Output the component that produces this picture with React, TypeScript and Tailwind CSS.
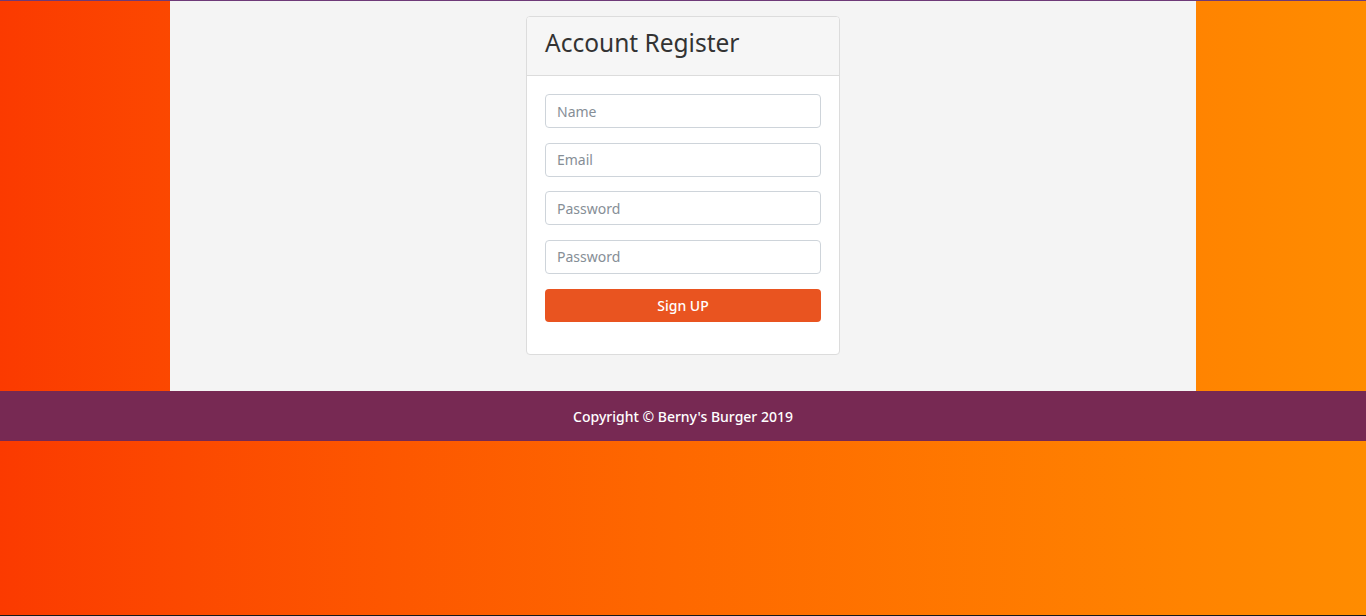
const fields = [
  { type: "text", placeholder: "Name" },
  { type: "email", placeholder: "Email" },
  { type: "password", placeholder: "Password" },
  { type: "password", placeholder: "Password" },
];

const App = () => {
  return (
    <div
      className="h-[616px] flex flex-col border-t border-t-[#6e3a78] border-b border-b-[#1a1a1a] bg-gradient-to-r from-[#fb3a00] to-[#ff8c00]"
      style={{ fontFamily: '"Noto Sans", "Open Sans", sans-serif' }}
    >
      <main className="mx-auto w-[1026px] h-[390px] bg-[#f4f4f4] flex justify-center pt-[15px]">
        <div className="w-[314px] h-[339px] bg-white border border-[#dcdcdc] rounded-[4px] overflow-hidden">
          <div className="h-[59px] bg-[#f6f6f6] border-b border-[#dcdcdc] px-[18px] flex items-start pt-[11px]">
            <h2 className="text-[24.5px] leading-[30px] text-[#333]">Account Register</h2>
          </div>
          <form className="px-[18px] pt-[18px] flex flex-col">
            {fields.map((f, i) => (
              <input
                key={i}
                type={f.type}
                placeholder={f.placeholder}
                className="h-[34px] mb-[14.5px] w-full border border-[#ced4da] rounded-[4px] px-[11px] text-[14px] text-[#495057] placeholder:text-[#868e96] outline-none"
              />
            ))}
            <button
              type="button"
              className="mt-[1px] h-[33px] w-full bg-[#e95420] text-white text-[14px] font-medium rounded-[4px]"
            >
              Sign UP
            </button>
          </form>
        </div>
      </main>
      <footer className="h-[50px] bg-[#772953] flex items-center justify-center">
        <p className="text-white text-[14px] font-medium">Copyright © Berny's Burger 2019</p>
      </footer>
    </div>
  );
};

export default App;
